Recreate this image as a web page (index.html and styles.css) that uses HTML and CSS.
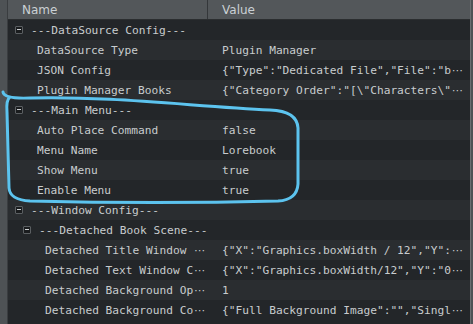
FILE: index.html
```html
<!DOCTYPE html>
<html lang="en">
<head>
    <meta charset="UTF-8">
    <title>Plugin Parameters</title>
    <link rel="stylesheet" href="styles.css">
</head>
<body>

    <div class="frame">
        <div class="side"></div>

        <div class="tree">
            <div class="head">
                <div class="hcell name-col">Name</div>
                <div class="hcell">Value</div>
            </div>

            <div class="row group">
                <div class="name lvl0"><span class="toggle"></span>---DataSource Config---</div>
                <div class="value"></div>
            </div>
            <div class="row">
                <div class="name lvl1">DataSource Type</div>
                <div class="value">Plugin Manager</div>
            </div>
            <div class="row">
                <div class="name lvl1">JSON Config</div>
                <div class="value">{"Type":"Dedicated File","File":"b<span class="dots">⋯</span></div>
            </div>
            <div class="row">
                <div class="name lvl1">Plugin Manager Books</div>
                <div class="value">{"Category Order":"[\"Characters\"<span class="dots">⋯</span></div>
            </div>

            <div class="row group">
                <div class="name lvl0"><span class="toggle"></span>---Main Menu---</div>
                <div class="value"></div>
            </div>
            <div class="row">
                <div class="name lvl1">Auto Place Command</div>
                <div class="value">false</div>
            </div>
            <div class="row">
                <div class="name lvl1">Menu Name</div>
                <div class="value">Lorebook</div>
            </div>
            <div class="row">
                <div class="name lvl1">Show Menu</div>
                <div class="value">true</div>
            </div>
            <div class="row">
                <div class="name lvl1">Enable Menu</div>
                <div class="value">true</div>
            </div>

            <div class="row group">
                <div class="name lvl0"><span class="toggle"></span>---Window Config---</div>
                <div class="value"></div>
            </div>
            <div class="row group">
                <div class="name lvl1b"><span class="toggle"></span>---Detached Book Scene---</div>
                <div class="value"></div>
            </div>
            <div class="row">
                <div class="name lvl2">Detached Title Window <span class="dots">⋯</span></div>
                <div class="value">{"X":"Graphics.boxWidth / 12","Y":<span class="dots">⋯</span></div>
            </div>
            <div class="row">
                <div class="name lvl2">Detached Text Window C<span class="dots">⋯</span></div>
                <div class="value">{"X":"Graphics.boxWidth/12","Y":"0<span class="dots">⋯</span></div>
            </div>
            <div class="row">
                <div class="name lvl2">Detached Background Op<span class="dots">⋯</span></div>
                <div class="value">1</div>
            </div>
            <div class="row">
                <div class="name lvl2">Detached Background Co<span class="dots">⋯</span></div>
                <div class="value">{"Full Background Image":"","Singl<span class="dots">⋯</span></div>
            </div>
        </div>

        <div class="edge"></div>

        <!-- hand drawn mark round the menu block -->
        <svg class="mark" width="473" height="324" viewBox="0 0 473 324">
            <path d="M3 92 Q4 99 30 98 C110 96 190 106 270 110 Q297 111 298 128 L298 184 Q297 200 278 201 C200 203 110 203 30 201 Q10 200 9 188 L7 112 Q6 100 10 97"
                  fill="none" stroke="#5cc3ee" stroke-width="3" stroke-linecap="round" stroke-linejoin="round"/>
        </svg>
    </div>

</body>
</html>
```

FILE: styles.css
```css
body {
    margin: 0;
    background-color: #232629;
    overflow: hidden;
}
.frame {
    position: relative;
    display: flex;
    width: 473px;
    height: 324px;
    overflow: hidden;
}
.side {
    width: 8px;
    background-color: #4e5255;
    border-right: 1px solid #3a3d40;
    box-sizing: border-box;
}
.edge {
    width: 2px;
    background-color: #4e5255;
    border-left: 1px solid #6a6e71;
}
.tree {
    flex: 1;
    display: flex;
    flex-direction: column;
    font-family: "DejaVu Sans Mono", monospace;
    font-size: 11.2px;
    color: #c8ccce;
}

/* header */
.head {
    display: grid;
    grid-template-columns: 200px 1fr;
    height: 19px;
    background-color: #53575a;
    border-bottom: 1px solid #2b2e30;
    font-family: "DejaVu Sans", sans-serif;
    font-size: 12px;
    color: #cad0d4;
}
.hcell {
    display: flex;
    align-items: center;
    padding-left: 14px;
}
.name-col {
    border-right: 1px solid #34373a;
}

/* rows */
.row {
    display: grid;
    grid-template-columns: 200px 1fr;
    height: 20px;
    background-color: #2a2d30;
}
.row:nth-child(even) {
    background-color: #232629;
}
.name, .value {
    display: flex;
    align-items: center;
    white-space: pre;
    overflow: hidden;
}
.value {
    padding-left: 14px;
}
.lvl0 { padding-left: 7px; }
.lvl1 { padding-left: 29px; }
.lvl1b { padding-left: 15px; }
.lvl2 { padding-left: 37px; }

.toggle {
    position: relative;
    width: 8px;
    height: 8px;
    margin-right: 8px;
    background-color: #1a1c1e;
    border: 1px solid #5b5f62;
    border-radius: 1px;
    box-sizing: border-box;
}
.toggle::after {
    content: "";
    position: absolute;
    left: 1px;
    right: 1px;
    top: 2px;
    height: 1px;
    background-color: #d0d4d6;
}
.dots {
    font-family: "DejaVu Sans", sans-serif;
    font-size: 11px;
    margin-left: 1px;
}

.mark {
    position: absolute;
    left: 0;
    top: 0;
    pointer-events: none;
}
```
